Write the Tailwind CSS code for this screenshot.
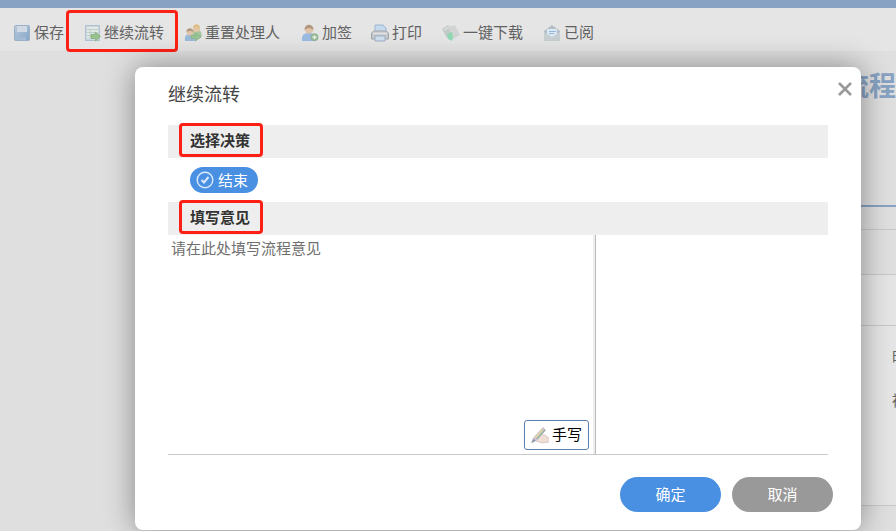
<!DOCTYPE html>
<html lang="zh-CN">
  <head>
    <meta charset="UTF-8">
    <meta name="viewport" content="width=device-width, initial-scale=1.0" />
    <title>继续流转</title>
    <script src="https://cdn.jsdelivr.net/npm/@tailwindcss/browser@4"></script>
  </head>

  <body class="relative min-h-screen overflow-hidden bg-[#dfdfdf] font-['Noto_Sans_CJK_SC',sans-serif] text-[#626262]">
    <div class="h-2 bg-[#87a2c2]"></div>

    <!-- toolbar -->
    <nav class="flex h-[43px] items-center bg-[#e5e5e5] pt-1 pl-3 text-[15px] leading-6 whitespace-nowrap [&_svg]:mt-0.5">
      <button class="flex w-[71px] items-center gap-1">
        <svg class="size-[18px] shrink-0" viewBox="0 0 18 18">
          <defs>
            <linearGradient id="disk" x1="0" y1="0" x2="1" y2="1"><stop offset="0" stop-color="#bccbda"/><stop offset="1" stop-color="#83a5c9"/></linearGradient>
          </defs>
          <rect x="2.5" y="1.5" width="15" height="15" rx="1" fill="url(#disk)" stroke="#9bb0c6"/>
          <rect x="5" y="2" width="10" height="6" fill="#d0dae4"/>
          <path d="M6 13h8v3H6z" fill="#a3bad2"/>
        </svg>
        保存
      </button>
      <button class="relative flex w-[101px] items-center gap-[3px]">
        <svg class="size-[18px] shrink-0" viewBox="0 0 18 18">
          <rect x="2.5" y="1.5" width="14" height="15" fill="#c9d7e1" stroke="#b0c0d0"/>
          <path d="M4 4h11M4 7h11M4 10h6M4 13h5" stroke="#e3eae6" stroke-width="2"/>
          <path d="M4 5.500h11M4 8.500h8M4 11.500h4M7 6v8" stroke="#bccac2" stroke-width=".8"/>
          <path d="M8 10.500h4.500V8l5 4.500-5 4.500v-2.500H8z" fill="#98c28c" stroke="#86b07c" stroke-width=".8"/>
        </svg>
        继续流转
        <span class="absolute -top-2.5 right-1.5 -bottom-2 -left-[17px] rounded-sm border-3 border-[#ff2015]"></span>
      </button>
      <button class="flex w-[117px] items-center gap-[3px]">
        <svg class="size-[18px] shrink-0" viewBox="0 0 18 18">
          <path d="M8 11c0-4 2-5 5-5s5 1 4.500 7H9z" fill="#a6c59c"/>
          <circle cx="12.500" cy="4.500" r="3.500" fill="#e2c5a5"/>
          <path d="M9 4c0-5 7-5 7 0-2-1.500-4-1.500-7 0z" fill="#dfbe80"/>
          <path d="M1 17c-1-6 2-7 5-7s5 1 5 7z" fill="#9bbbdc"/>
          <circle cx="6" cy="8" r="3.500" fill="#e0c5aa"/>
          <path d="M2.500 8c-.5-5 7-5 7 0-2-1.500-5-1.500-7 0z" fill="#b59a83"/>
          <path d="M7 11.500h4.500V9l5.500 4-5.500 4v-2.500H7z" fill="#9ac394" stroke="#86b181" stroke-width=".7"/>
        </svg>
        重置处理人
      </button>
      <button class="flex w-[70px] items-center gap-[3px]">
        <svg class="size-[18px] shrink-0" viewBox="0 0 18 18">
          <path d="M1 17c-1-7 3-8 7-8s7 1 7 8z" fill="#9bbbe0"/>
          <circle cx="8" cy="5.500" r="4" fill="#dfc4aa"/>
          <path d="M3.500 6C3-1 13-1 12.500 6c-3-2.500-6-2.500-9 0z" fill="#b3967f"/>
          <circle cx="13.500" cy="13.200" r="3.600" fill="#9abb96" stroke="#8aad8a" stroke-width=".6"/>
          <path d="M13.500 11.200v4M11.500 13.200h4" stroke="#e8eee6" stroke-width="1.400"/>
        </svg>
        加签
      </button>
      <button class="flex w-[71px] items-center gap-[3px]">
        <svg class="size-[18px] shrink-0" viewBox="0 0 18 18">
          <path d="M4 8V1h8l3 3v4z" fill="#c6daee" stroke="#9bb5d0"/>
          <path d="M.5 9L3 7h12l2.500 2v6h-17z" fill="#c6c8cc" stroke="#a0a5ac"/>
          <path d="M2 9.500h14" stroke="#e2e2e2" stroke-width="1.500"/>
          <path d="M4 12h10v5H4z" fill="#cfdeed" stroke="#9db0c4"/>
        </svg>
        打印
      </button>
      <button class="flex w-[101px] items-center gap-[3px]">
        <svg class="size-[18px] shrink-0" viewBox="0 0 18 18">
          <path d="M0 5l6-4 4 3 1 6-6 4z" fill="#c4cac7"/>
          <path d="M7 3l6-2 5 10-7 4z" fill="#d2d4d3"/>
          <path d="M2 6l5-3" stroke="#dbdedc" stroke-width="1.500"/>
          <path d="M5 10l5-2 1 5-1 4-4-2z" fill="#91d8b3"/>
        </svg>
        一键下载
      </button>
      <button class="flex items-center gap-[3px]">
        <svg class="size-[18px] shrink-0" viewBox="0 0 18 18">
          <path d="M1 7l8-6 8 6v9q0 1-1 1H2q-1 0-1-1z" fill="#b3bfc6"/>
          <path d="M4 5h10v6l-5 3-5-3z" fill="#dce8f2"/>
          <path d="M6 7.500h7M6 9.500h5" stroke="#93b9e0"/>
          <path d="M1 8l8 5 8-5v8q0 1-1 1H2q-1 0-1-1z" fill="#c8cfd2"/>
        </svg>
        已阅
      </button>
    </nav>

    <!-- form page under the dialog -->
    <main class="ml-[17%] whitespace-nowrap">
      <div class="flex h-[156px] justify-end overflow-hidden border-b-2 border-[#87a2c2] pt-4">
        <h1 class="text-[27px] leading-9 font-bold text-[#87a2c2]">流程</h1>
      </div>
      <div class="h-[23px] border-b border-[#c8c8c8]"></div>
      <div class="h-[45px] border-b border-[#c8c8c8]"></div>
      <div class="h-[51px] border-b border-[#c8c8c8] bg-[#e5e5e5]"></div>
      <div class="flex h-[180px] justify-end overflow-hidden border-b border-[#c8c8c8] bg-[#e5e5e5] pt-[18px] text-[15px]">
        <div class="w-1 overflow-hidden leading-6">
          <p class="mb-5">时间</p>
          <p>被访</p>
        </div>
      </div>
    </main>

    <!-- dialog -->
    <section role="dialog" aria-labelledby="dialog-title" class="absolute top-[67px] right-[35px] left-[135px] rounded-lg bg-white pt-3 pr-7 pb-[18px] pl-[33px] shadow-[0_0_30px_rgba(0,0,0,0.4)]">
      <header class="flex h-[46px] items-start justify-between">
        <h2 id="dialog-title" class="text-lg leading-7 text-[#444]">继续流转</h2>
        <button aria-label="关闭" class="-mt-1 -mr-[26px] p-1">
          <svg class="size-5" viewBox="0 0 20 20"><path d="M4 4l12 12M16 4L4 16" stroke="#999" stroke-width="2.600"/></svg>
        </button>
      </header>

      <div class="mr-[5px]">
        <h3 class="flex h-[33px] items-center bg-[#eee] pb-[3px] pl-[11px] text-[15px] font-bold text-[#333]">
          <span class="rounded-sm border-3 border-[#ff2015] pr-[10px] pl-2 leading-7">选择决策</span>
        </h3>
        <div class="flex h-11 items-center pl-[22px]">
          <button class="flex h-[26px] items-center gap-1 rounded-full bg-[#4990e2] pr-2.5 pl-1.5 text-[15px] text-white">
            <svg class="size-[18px]" viewBox="0 0 18 18" fill="none" stroke="#dbe9fa"><circle cx="9" cy="9" r="7.800" stroke-width="1.400"/><path d="M5.500 9l2.500 2.500L12.500 6" stroke-width="2"/></svg>
            结束
          </button>
        </div>
        <h3 class="flex h-[33px] items-center bg-[#eee] pb-[3px] pl-[11px] text-[15px] font-bold text-[#333]">
          <span class="rounded-sm border-3 border-[#ff2015] pr-[10px] pl-2 leading-7">填写意见</span>
        </h3>

        <div class="flex h-[220px] border-b border-[#c8c8c8]">
          <div class="relative w-[428px] border-r border-[#bbb]">
            <textarea aria-label="流程意见" placeholder="请在此处填写流程意见" class="block size-full resize-none border-r-2 border-[#eee] px-[3px] py-px text-[15px] leading-6 placeholder:text-[#707070]"></textarea>
            <button class="absolute right-1.5 bottom-1 flex h-[30px] items-center gap-[3px] rounded-[3px] border border-[#5b7fae] bg-white px-1.5 pb-0.5 text-[15px] text-black">
              <svg class="mt-0.5 size-[18px]" viewBox="0 0 18 18">
                <path d="M6 11l4-3 4 1 4 3v4l-7 1-6-2z" fill="#f0ded6" stroke="#d5bfc2" stroke-width=".8"/>
                <path d="M2 12L12 1l3 3L6 14l-5 3z" fill="#c9bdd3"/>
                <path d="M4 12l8-9" stroke="#e3d79a" stroke-width="1.500"/>
                <path d="M6 13l8-9" stroke="#91b7a3" stroke-width="1.200"/>
                <path d="M0 17l2-4 3 2z" fill="#8a9cab"/>
              </svg>
              手写
            </button>
          </div>
        </div>
      </div>

      <footer class="flex justify-end gap-[11px] pt-[22px] text-[15px] text-white">
        <button class="h-[35px] w-[101px] rounded-full bg-[#4990e2]">确定</button>
        <button class="h-[35px] w-[101px] rounded-full bg-[#999]">取消</button>
      </footer>
    </section>
  </body>
</html>
